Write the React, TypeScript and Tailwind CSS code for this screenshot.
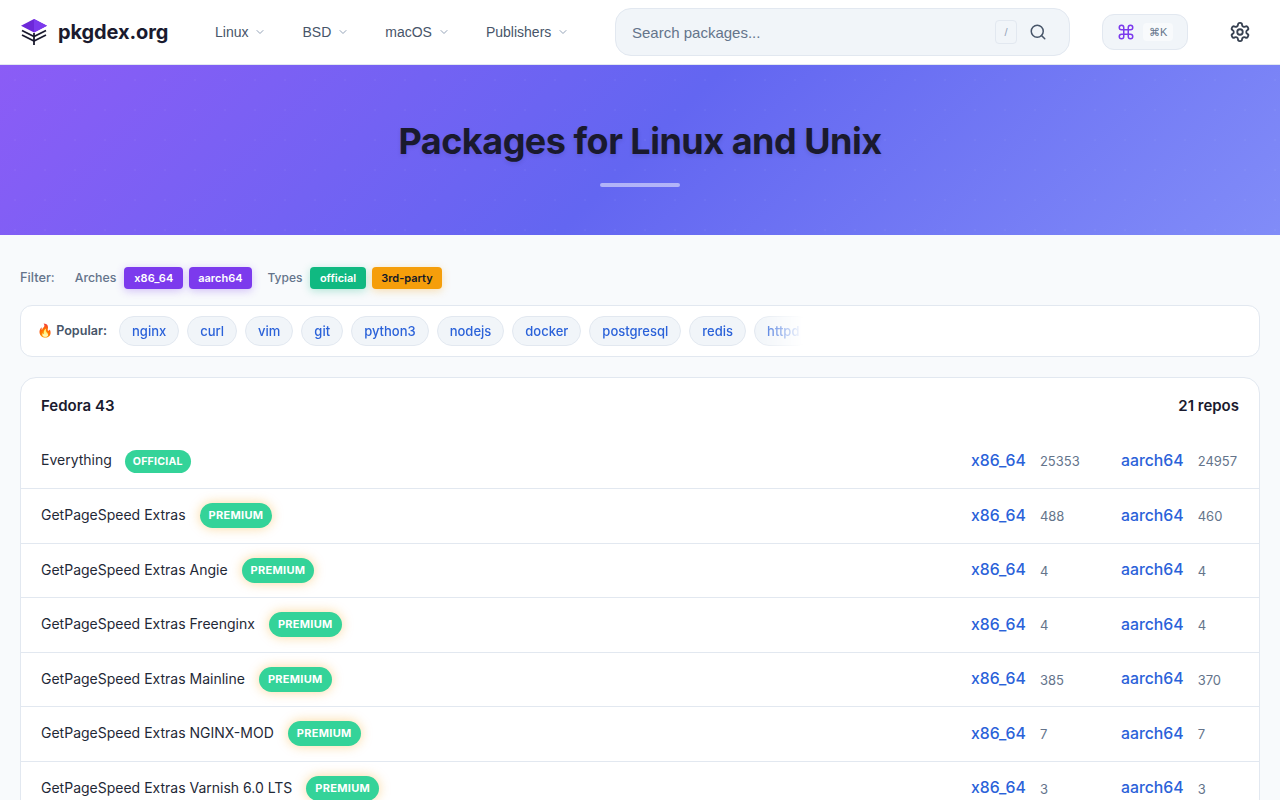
import { ChevronDown, Search, Command } from "lucide-react";

const navItems = ["Linux", "BSD", "macOS", "Publishers"];
const popular = ["nginx", "curl", "vim", "git", "python3", "nodejs", "docker", "postgresql", "redis", "httpd"];

const repos = [
  { name: "Everything", badge: "OFFICIAL", x86: "25353", arm: "24957" },
  { name: "GetPageSpeed Extras", badge: "PREMIUM", x86: "488", arm: "460" },
  { name: "GetPageSpeed Extras Angie", badge: "PREMIUM", x86: "4", arm: "4" },
  { name: "GetPageSpeed Extras Freenginx", badge: "PREMIUM", x86: "4", arm: "4" },
  { name: "GetPageSpeed Extras Mainline", badge: "PREMIUM", x86: "385", arm: "370" },
  { name: "GetPageSpeed Extras NGINX-MOD", badge: "PREMIUM", x86: "7", arm: "7" },
  { name: "GetPageSpeed Extras Varnish 6.0 LTS", badge: "PREMIUM", x86: "3", arm: "3" },
  { name: "GetPageSpeed Extras Varnish 7.0", badge: "PREMIUM", x86: "3", arm: "3" },
];

function Logo() {
  return (
    <svg width="28" height="28" viewBox="0 0 28 28" fill="none">
      <path d="M14 1 27 7.8 14 14.6 1 7.8Z" fill="#6d28d9" />
      <path d="M14 1 27 7.8 14 14.6Z" fill="#7c3aed" />
      <path d="M2 12.5 14 18.6l12-6.1" stroke="#1a1a2e" strokeWidth="1.8" />
      <path d="M2 17 14 23l12-6" stroke="#1a1a2e" strokeWidth="1.8" />
      <path d="M14 15v12" stroke="#1a1a2e" strokeWidth="1.8" />
    </svg>
  );
}

function Gear() {
  return (
    <svg width="22" height="22" viewBox="0 0 24 24" fill="none" stroke="#374151" strokeWidth="2" strokeLinecap="round" strokeLinejoin="round">
      <path d="M12.22 2h-.44a2 2 0 0 0-2 2v.18a2 2 0 0 1-1 1.73l-.43.25a2 2 0 0 1-2 0l-.15-.08a2 2 0 0 0-2.73.73l-.22.38a2 2 0 0 0 .73 2.73l.15.1a2 2 0 0 1 1 1.72v.51a2 2 0 0 1-1 1.74l-.15.09a2 2 0 0 0-.73 2.73l.22.38a2 2 0 0 0 2.73.73l.15-.08a2 2 0 0 1 2 0l.43.25a2 2 0 0 1 1 1.73V20a2 2 0 0 0 2 2h.44a2 2 0 0 0 2-2v-.18a2 2 0 0 1 1-1.73l.43-.25a2 2 0 0 1 2 0l.15.08a2 2 0 0 0 2.73-.73l.22-.39a2 2 0 0 0-.73-2.73l-.15-.08a2 2 0 0 1-1-1.74v-.5a2 2 0 0 1 1-1.74l.15-.09a2 2 0 0 0 .73-2.73l-.22-.38a2 2 0 0 0-2.73-.73l-.15.08a2 2 0 0 1-2 0l-.43-.25a2 2 0 0 1-1-1.73V4a2 2 0 0 0-2-2z" />
      <circle cx="12" cy="12" r="3" />
    </svg>
  );
}

function Header() {
  return (
    <header className="flex h-[65px] items-center border-b border-[#e2e8f0] bg-white pr-5 pl-5">
      <div className="flex w-[177px] items-center gap-[10px]">
        <Logo />
        <span className="text-[20px] font-bold tracking-[-0.1px] text-[#1a1a2e]">pkgdex.org</span>
      </div>
      <nav className="flex w-[418px] items-center font-['Liberation_Sans',sans-serif]">
        {navItems.map((n) => (
          <div key={n} className="flex items-center gap-[5px] py-2 pr-[18px] pl-[18px] text-sm text-[#475569]">
            {n}
            <ChevronDown size={12} className="ml-[1px] text-[#94a3b8]" />
          </div>
        ))}
      </nav>
      <div className="flex h-12 w-[455px] items-center rounded-2xl border border-[#e2e8f0] bg-[#f1f5f9] pr-[22px] pl-4 font-['Liberation_Sans',sans-serif]">
        <span className="flex-1 pt-[2px] text-[15px] text-[#64748b]">Search packages...</span>
        <span className="mr-3 flex h-6 w-[22px] items-center justify-center rounded border border-[#e2e8f0] text-[11px] text-[#94a3b8]">/</span>
        <Search size={18} className="text-[#475569]" />
      </div>
      <div className="ml-8 flex h-9 w-[86px] items-center gap-2 rounded-xl border border-[#e2e8f0] bg-[#f1f5f9] pl-[14px] font-['Liberation_Sans',sans-serif]">
        <Command size={18} className="text-[#7c3aed]" />
        <span className="flex h-[18px] items-center rounded bg-[#f8fafc] px-[6px] text-[11px] text-[#64748b]">⌘K</span>
      </div>
      <div className="ml-[41px]">
        <Gear />
      </div>
    </header>
  );
}

function Hero() {
  return (
    <section className="relative flex h-[170px] flex-col items-center bg-[linear-gradient(135deg,#8b5cf6_0%,#6366f1_50%,#818cf8_100%)] pt-[52px]">
      <div className="absolute inset-0 bg-[radial-gradient(rgba(255,255,255,0.04)_1px,transparent_1px)] bg-[size:30px_30px]" />
      <h1 className="relative text-[36px] leading-[48px] font-bold tracking-[-0.5px] text-[#1a1a2e] [text-shadow:0_2px_4px_rgba(0,0,0,0.1)]">
        Packages for Linux and Unix
      </h1>
      <div className="relative mt-[18px] h-1 w-20 rounded-full bg-white/50" />
    </section>
  );
}

function FilterBar() {
  return (
    <div className="flex items-center text-xs font-medium text-[#64748b]">
      <span className="mr-5 text-[12.8px]">Filter:</span>
      <span className="mr-2 text-[12.3px]">Arches</span>
      <span className="mr-[6px] rounded bg-[#7c3aed] px-[10px] py-1 text-[11px] leading-[14px] font-semibold text-white shadow-[0_2px_8px_rgba(124,58,237,0.3)]">x86_64</span>
      <span className="mr-4 rounded bg-[#7c3aed] px-[9px] py-1 text-[11px] leading-[14px] font-semibold text-white shadow-[0_2px_8px_rgba(124,58,237,0.3)]">aarch64</span>
      <span className="mr-2">Types</span>
      <span className="mr-[6px] rounded bg-[#10b981] px-[9.5px] py-1 text-[11px] leading-[14px] font-semibold text-white shadow-[0_2px_8px_rgba(16,185,129,0.3)]">official</span>
      <span className="rounded bg-[#f59e0b] px-[9.5px] py-1 text-[11px] leading-[14px] font-semibold text-[#111827] shadow-[0_2px_8px_rgba(245,158,11,0.3)]">3rd-party</span>
    </div>
  );
}

function Popular() {
  return (
    <div className="mt-4 flex h-[52px] items-center rounded-xl border border-[#e2e8f0] bg-white pl-4">
      <span className="mr-3 text-[12.6px] font-semibold whitespace-nowrap text-[#475569]">
        <span className="text-[13px]">🔥</span> Popular:
      </span>
      <div className="flex w-[684px] items-center gap-2 overflow-hidden [mask-image:linear-gradient(to_right,black_93%,transparent_100%)]">
        {popular.map((p) => (
          <span key={p} className="rounded-full border border-[#e2e8f0] bg-[#f1f5f9] px-3 py-[5px] text-[13px] leading-[18px] font-medium text-[#2b62d9]">
            {p}
          </span>
        ))}
      </div>
    </div>
  );
}

function Row({ repo, last }: { repo: (typeof repos)[number]; last: boolean }) {
  const premium = repo.badge === "PREMIUM";
  return (
    <div className={`flex h-[54.5px] items-center pl-5 ${last ? "" : "border-b border-[#e2e8f0]"}`}>
      <div className="flex flex-1 items-center text-sm text-[#1f2937]">
        <a className={premium ? "pb-[1.5px]" : "pb-[3px]"}>{repo.name}</a>
        <span
          className={`rounded-full bg-[#34d399] text-white ${
            premium
              ? "ml-[14px] px-[9px] py-[5px] text-[11px] leading-[15px] font-bold tracking-[0.3px] shadow-[0_0_12px_rgba(245,158,11,0.4)]"
              : "ml-[13px] px-2 py-1 text-[10.6px] leading-[15px] font-bold tracking-[0.2px]"
          }`}
        >
          {repo.badge}
        </span>
      </div>
      <div className={`flex w-[150px] items-center gap-[14px] ${premium ? "" : "pb-[1px]"}`}>
        <a className="text-[15.8px] font-medium text-[#2b62d9]">x86_64</a>
        <span className="pt-[2px] text-[13px] text-[#64748b]">{repo.x86}</span>
      </div>
      <div className={`flex w-[138px] items-center gap-[14px] ${premium ? "" : "pb-[1px]"}`}>
        <a className="text-[15.8px] font-medium text-[#2b62d9]">aarch64</a>
        <span className="pt-[2px] text-[13px] text-[#64748b]">{repo.arm}</span>
      </div>
    </div>
  );
}

export default function App() {
  return (
    <div className="h-[800px] overflow-hidden bg-[#f8fafc] font-['Inter',sans-serif]">
      <Header />
      <Hero />
      <main className="px-5 pt-8">
        <FilterBar />
        <Popular />
        <div className="mt-5 rounded-2xl border border-[#e2e8f0] bg-white">
          <div className="flex h-[56.5px] items-center justify-between px-5 text-[15px] font-semibold text-[#1a1a2e]">
            <span>Fedora 43</span>
            <span>21 repos</span>
          </div>
          {repos.map((r, i) => (
            <Row key={r.name} repo={r} last={i === repos.length - 1} />
          ))}
        </div>
      </main>
    </div>
  );
}
